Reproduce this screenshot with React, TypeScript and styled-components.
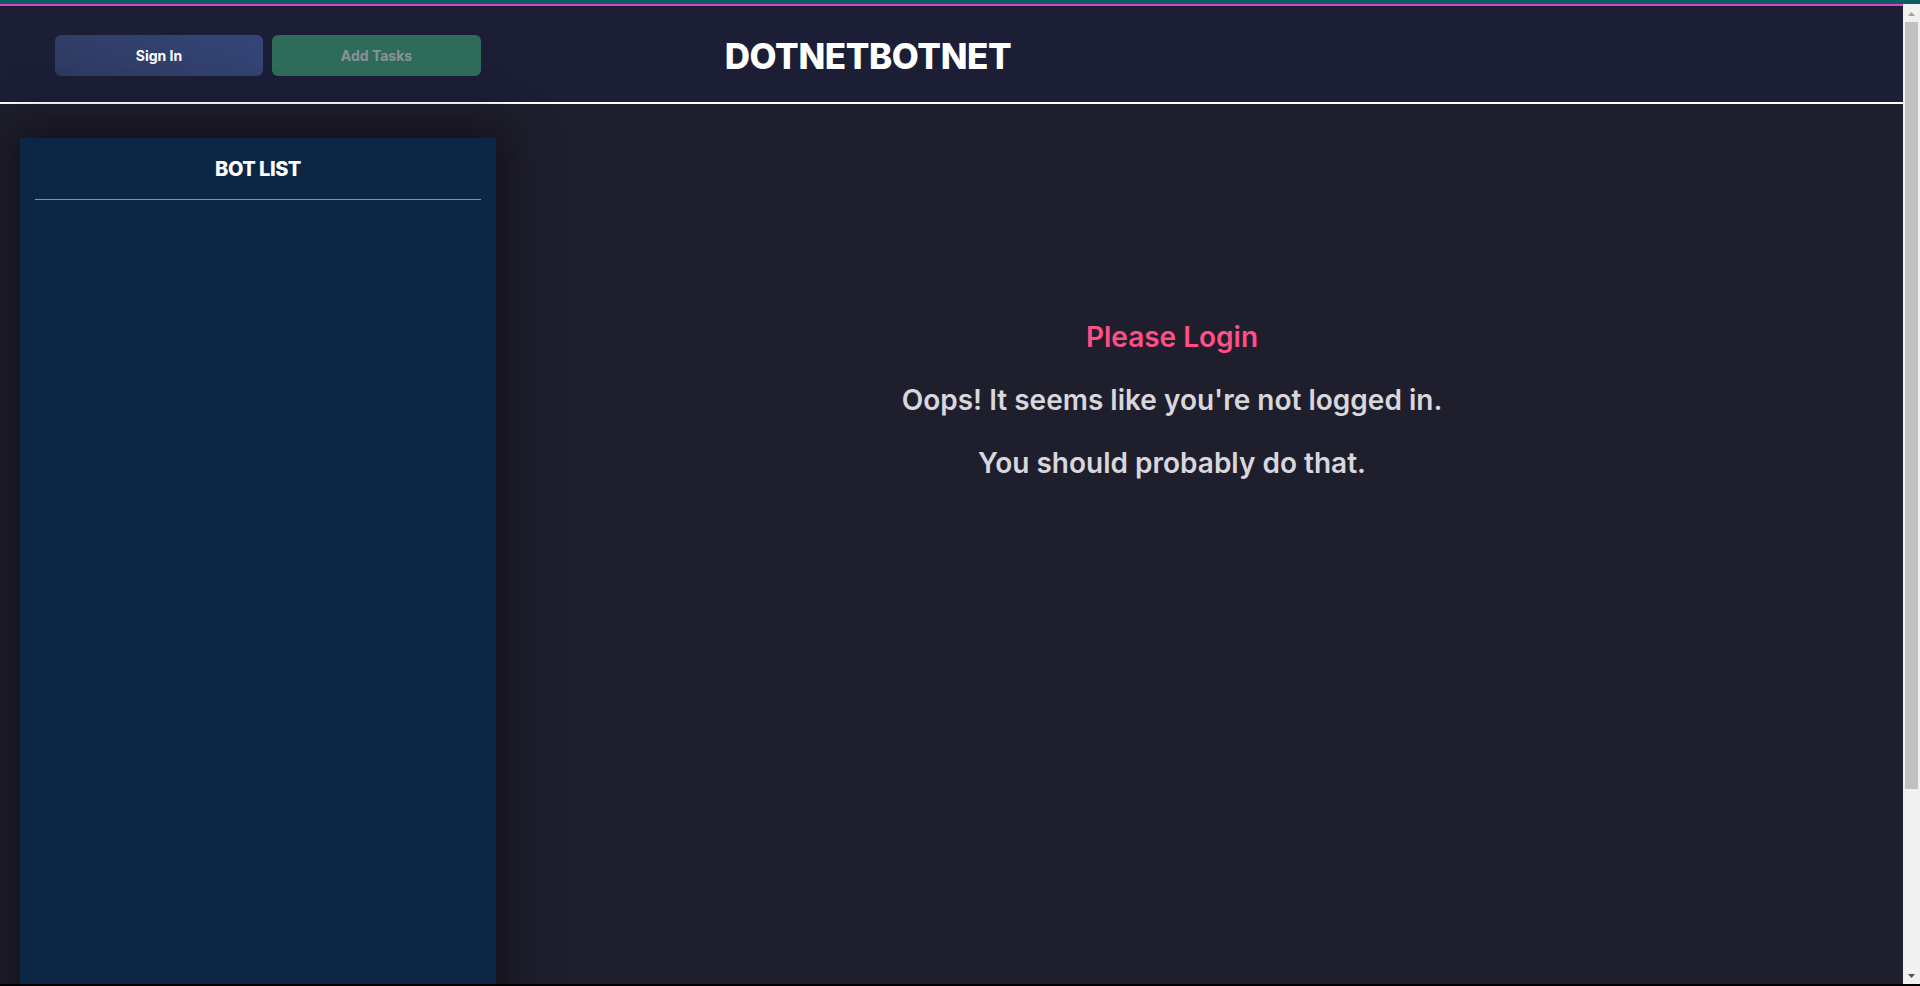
import React from "react";
import styled, { createGlobalStyle } from "styled-components";

const GlobalStyle = createGlobalStyle`
  html, body {
    margin: 0;
    padding: 0;
    height: 100%;
    overflow: hidden;
    background: #000;
  }
  #root {
    height: 100%;
  }
  * {
    box-sizing: border-box;
  }
`;

const FONT = `"Inter", "Noto Sans", "Liberation Sans", sans-serif`;

const Frame = styled.div`
  display: flex;
  flex-direction: column;
  height: 100vh;
  font-family: ${FONT};
`;

const WindowEdge = styled.div<{ $color: string; $size: number }>`
  flex: 0 0 ${(p) => p.$size}px;
  background: ${(p) => p.$color};
`;

const Viewport = styled.div`
  flex: 1;
  display: flex;
  min-height: 0;
`;

const Page = styled.div`
  flex: 1;
  overflow: hidden;
  background: #1f1e2d;
`;

// classic windows-style scrollbar on the right of the viewport
const ScrollTrack = styled.div`
  flex: 0 0 17px;
  display: flex;
  flex-direction: column;
  background: #f1f1f1;
`;

const ScrollArrow = styled.div<{ $down?: boolean }>`
  flex: 0 0 17px;
  display: flex;
  align-items: center;
  justify-content: center;
  padding-top: ${(p) => (p.$down ? 0 : 2)}px;
`;

const ScrollThumb = styled.div`
  height: 767px;
  margin: 1px 2px 0;
  background: #c1c1c1;
`;

const ScrollSpacer = styled.div`
  flex: 1;
`;

const Header = styled.header`
  display: flex;
  align-items: center;
  height: 100px;
  padding: 3px 55px 0;
  background: #1b1e35;
  border-top: 2px solid #d944c6;
  border-bottom: 2px solid #ffffff;
`;

const ButtonGroup = styled.div`
  display: flex;
  gap: 9px;
`;

const NavButton = styled.button<{ $variant: "primary" | "success" }>`
  width: ${(p) => (p.$variant === "primary" ? 208 : 209)}px;
  height: 41px;
  border: none;
  border-radius: 6px;
  font-family: ${FONT};
  font-size: 14px;
  font-weight: 700;
  cursor: pointer;
  color: ${(p) => (p.$variant === "primary" ? "#ffffff" : "#8b9196")};
  background: ${(p) =>
    p.$variant === "primary"
      ? "linear-gradient(20deg, #2d3a5f 0%, #36457a 100%)"
      : "#2f6b5b"};
`;

const Title = styled.h1`
  width: 600px;
  margin: 0 0 0 87px;
  text-align: center;
  color: #ffffff;
  font-size: 35px;
  font-weight: 800;
  letter-spacing: -0.4px;
`;

const Body = styled.div`
  display: flex;
  align-items: flex-start;
`;

const Sidebar = styled.aside`
  flex: 0 0 476px;
  height: 1055px;
  margin: 34px 0 20px 20px;
  padding: 16px 15px;
  background: #0c2646;
  box-shadow: 0 0 40px 12px rgba(10, 10, 14, 0.55);
`;

const SidebarTitle = styled.h2`
  margin: 0;
  line-height: 30px;
  text-align: center;
  color: #ffffff;
  font-size: 20px;
  font-weight: 800;
  letter-spacing: -0.5px;
`;

const Divider = styled.hr`
  margin: 15px 0 0;
  border: none;
  border-top: 1px solid #7f92ad;
`;

const Main = styled.main`
  flex: 1;
  display: flex;
  flex-direction: column;
  align-items: center;
  gap: 27px;
  padding: 215px 55px 0 0;
`;

const Message = styled.p<{ $accent?: boolean }>`
  margin: 0;
  line-height: 36px;
  font-size: 28px;
  font-weight: 600;
  color: ${(p) => (p.$accent ? "#ff4f86" : "#d7d7dc")};
`;

const Triangle = ({ down, color }: { down?: boolean; color: string }) => (
  <svg width="7" height="4" viewBox="0 0 7 4">
    <polygon points={down ? "0,0 7,0 3.5,4" : "0,4 7,4 3.5,0"} fill={color} />
  </svg>
);

const App = () => {
  return (
    <>
      <GlobalStyle />
      <Frame>
        <WindowEdge $color="#0b5d63" $size={4} />
        <Viewport>
          <Page>
            <Header>
              <ButtonGroup>
                <NavButton $variant="primary">Sign In</NavButton>
                <NavButton $variant="success">Add Tasks</NavButton>
              </ButtonGroup>
              <Title>DOTNETBOTNET</Title>
            </Header>
            <Body>
              <Sidebar>
                <SidebarTitle>BOT LIST</SidebarTitle>
                <Divider />
              </Sidebar>
              <Main>
                <Message $accent>Please Login</Message>
                <Message>Oops! It seems like you're not logged in.</Message>
                <Message>You should probably do that.</Message>
              </Main>
            </Body>
          </Page>
          <ScrollTrack>
            <ScrollArrow>
              <Triangle color="#a3a3a3" />
            </ScrollArrow>
            <ScrollThumb />
            <ScrollSpacer />
            <ScrollArrow $down>
              <Triangle down color="#505050" />
            </ScrollArrow>
          </ScrollTrack>
        </Viewport>
        <WindowEdge $color="#000000" $size={2} />
      </Frame>
    </>
  );
};

export default App;
